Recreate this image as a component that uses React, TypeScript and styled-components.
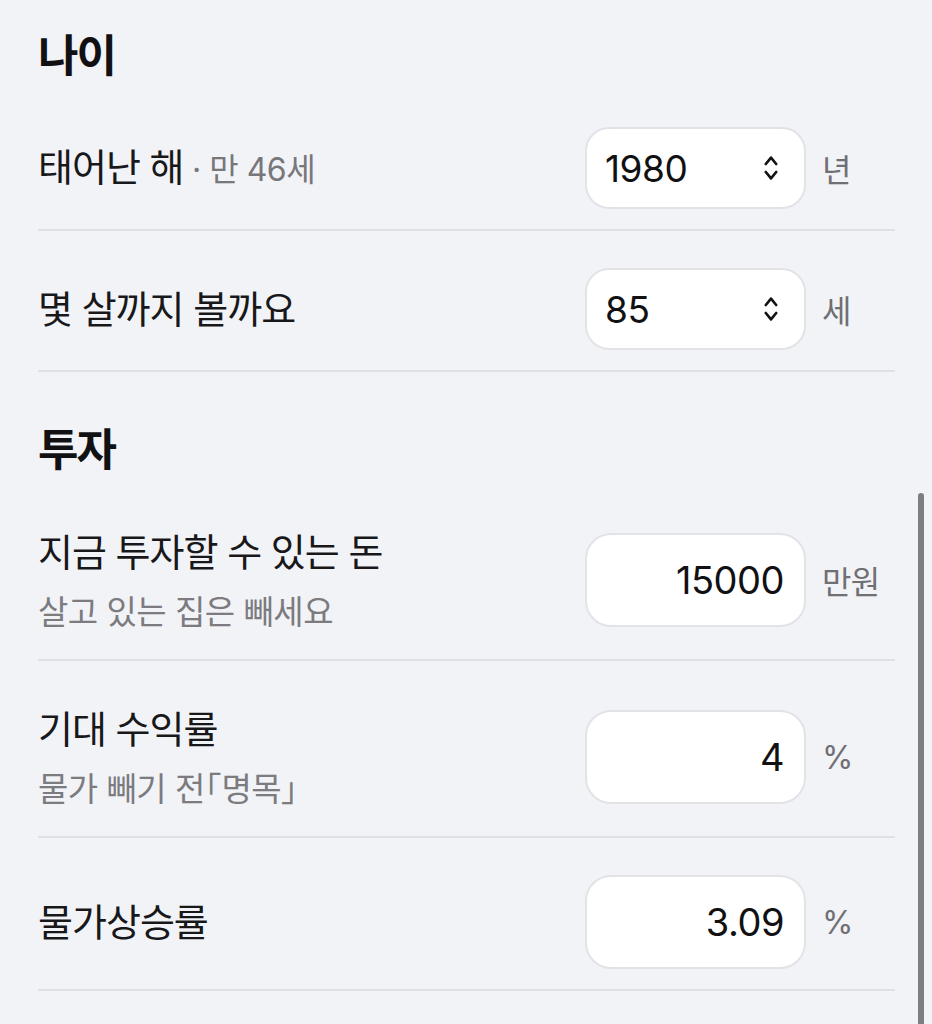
import React from "react";
import styled, { createGlobalStyle } from "styled-components";

const GlobalStyle = createGlobalStyle`
  html, body {
    margin: 0;
    padding: 0;
    background: #f2f3f7;
  }
  body {
    font-family: Inter, "Noto Sans CJK KR", sans-serif;
    color: #18181a;
  }
`;

interface SelectRowProps {
  label: string;
  hint?: string;
  value: string;
  options: string[];
  unit: string;
}

interface InputRowProps {
  label: string;
  sub?: React.ReactNode;
  value: string;
  unit: string;
}

const Chevrons = () => (
  <ChevronSvg viewBox="0 0 14 30" width="14" height="30">
    <path d="M1.8 11 L7 4.6 L12.2 11" />
    <path d="M1.8 19 L7 25.4 L12.2 19" />
  </ChevronSvg>
);

const SelectRow = ({ label, hint, value, options, unit }: SelectRowProps) => (
  <Row>
    <LabelBlock>
      <Label>
        {label}
        {hint && <Hint> · {hint}</Hint>}
      </Label>
    </LabelBlock>
    <SelectWrap>
      <StyledSelect defaultValue={value}>
        {options.map((o) => (
          <option key={o} value={o}>
            {o}
          </option>
        ))}
      </StyledSelect>
      <Chevrons />
    </SelectWrap>
    <Unit>{unit}</Unit>
  </Row>
);

const InputRow = ({ label, sub, value, unit }: InputRowProps) => (
  <Row>
    <LabelBlock>
      <Label>{label}</Label>
      {sub && <SubLabel>{sub}</SubLabel>}
    </LabelBlock>
    <NumberInput type="text" inputMode="decimal" defaultValue={value} />
    <Unit>{unit}</Unit>
  </Row>
);

const years = Array.from({ length: 80 }, (_, i) => String(1950 + i));
const ages = Array.from({ length: 41 }, (_, i) => String(70 + i));

const App = () => {
  return (
    <>
      <GlobalStyle />
      <Page>
        <Section>
          <Heading>나이</Heading>
          <SelectRow label="태어난 해" hint="만 46세" value="1980" options={years} unit="년" />
          <SelectRow label="몇 살까지 볼까요" value="85" options={ages} unit="세" />
        </Section>
        <Section>
          <Heading>투자</Heading>
          <InputRow label="지금 투자할 수 있는 돈" sub="살고 있는 집은 빼세요" value="15000" unit="만원" />
          <InputRow
            label="기대 수익률"
            sub={
              <>
                물가 빼기 전<Bracket>「</Bracket>명목<Bracket>」</Bracket>
              </>
            }
            value="4"
            unit="%"
          />
          <InputRow label="물가상승률" value="3.09" unit="%" />
        </Section>
      </Page>
      <ScrollThumb />
    </>
  );
};

export default App;

const Page = styled.div`
  padding: 0 37px 40px 38px;
`;

const Section = styled.section`
  & + & {
    margin-top: 22px;
  }
`;

const Heading = styled.h2`
  margin: 0 0 6px;
  padding-top: 28px;
  font-size: 44px;
  line-height: 56px;
  font-weight: 700;
  letter-spacing: -2px;
  color: #111113;
`;

const Row = styled.div`
  display: flex;
  align-items: center;
  padding: 37px 0 20px;
  border-bottom: 2px solid #dfe0e4;
`;

const LabelBlock = styled.div`
  flex: 1;
  display: flex;
  flex-direction: column;
  gap: 2px;
  min-width: 0;
`;

const Label = styled.div`
  font-size: 38px;
  line-height: 62px;
  letter-spacing: -1px;
  color: #18181a;
`;

const Hint = styled.span`
  font-size: 32px;
  letter-spacing: -0.5px;
  color: #77777c;
`;

const SubLabel = styled.div`
  font-size: 33px;
  line-height: 54px;
  letter-spacing: -0.5px;
  color: #7b7b80;
`;

const Bracket = styled.span`
  font-feature-settings: "halt";
  letter-spacing: 0;
`;

const SelectWrap = styled.div`
  position: relative;
  width: 221px;
  height: 82px;
  flex-shrink: 0;
`;

const StyledSelect = styled.select`
  appearance: none;
  -webkit-appearance: none;
  width: 100%;
  height: 100%;
  box-sizing: border-box;
  padding: 0 48px 0 18px;
  border: 2px solid #e3e3e7;
  border-radius: 24px;
  background: #ffffff;
  font-family: Inter, "Noto Sans CJK KR", sans-serif;
  font-size: 37px;
  letter-spacing: -0.5px;
  color: #111113;
  outline: none;
`;

const ChevronSvg = styled.svg`
  position: absolute;
  right: 28px;
  top: 26px;
  pointer-events: none;
  fill: none;
  stroke: #111113;
  stroke-width: 2.6;
  stroke-linecap: round;
  stroke-linejoin: round;
`;

const NumberInput = styled.input`
  width: 221px;
  height: 94px;
  flex-shrink: 0;
  box-sizing: border-box;
  padding: 0 20px 0 18px;
  border: 2px solid #e3e3e7;
  border-radius: 26px;
  background: #ffffff;
  font-family: Inter, "Noto Sans CJK KR", sans-serif;
  font-size: 38px;
  letter-spacing: -0.5px;
  text-align: right;
  color: #111113;
  outline: none;
`;

const Unit = styled.div`
  width: 89px;
  flex-shrink: 0;
  box-sizing: border-box;
  padding-left: 16px;
  font-size: 32px;
  letter-spacing: -0.6px;
  color: #6f6f74;
`;

const ScrollThumb = styled.div`
  position: fixed;
  top: 493px;
  bottom: -20px;
  right: 8px;
  width: 6px;
  border-radius: 3px;
  background: #7d7d82;
`;
